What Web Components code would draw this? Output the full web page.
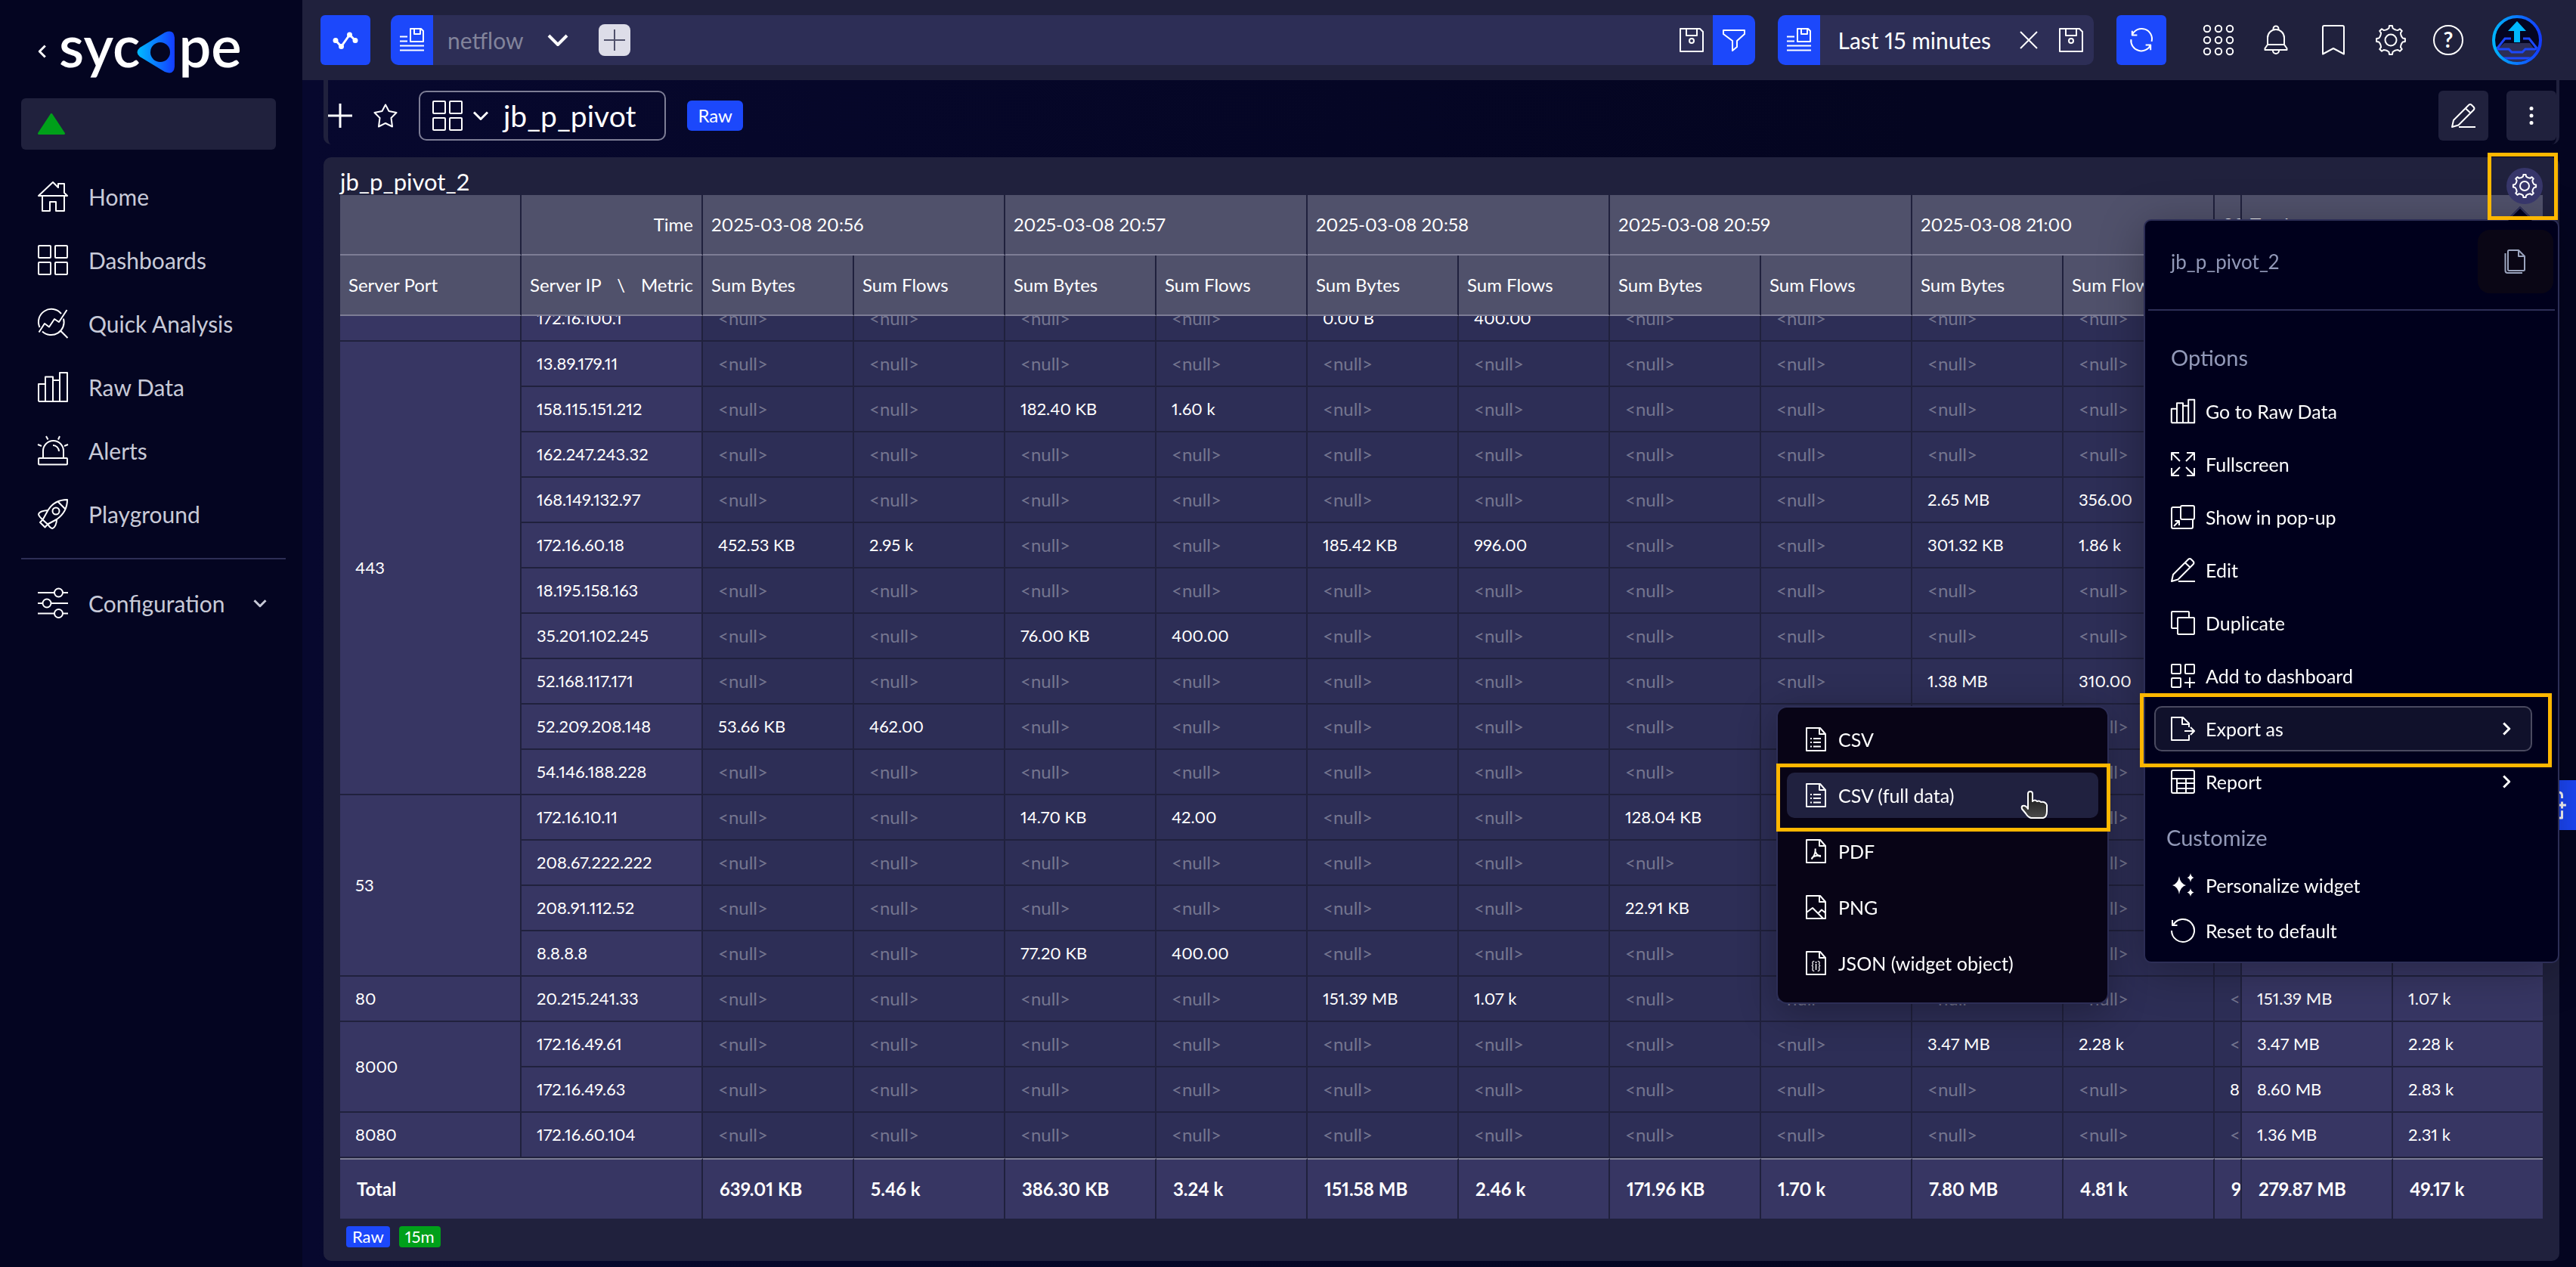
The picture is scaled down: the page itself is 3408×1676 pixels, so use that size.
<!DOCTYPE html>
<html lang="en">
<head>
<meta charset="utf-8">
<title>jb_p_pivot</title>
<style>
  :root {
    --blue: #1c48fb;
    --panel: #20213d;
    --field: #2d2e56;
    --head: #50516b;
    --line: #7d7d95;
    --key: #373663;
    --mark: #ffb700;
  }
  body {
    margin: 0;
    height: 100vh;
    overflow: hidden;
    color: #fff;
    font-family: Lato, "Open Sans", sans-serif;
    font-size: 24px;
    font-variant-numeric: proportional-nums;
    background: linear-gradient(90deg, #07082e 12%, #040520 75%);
  }
</style>
</head>
<body>
<app-shell></app-shell>

<script>
// 8 teeth gear, centered in a 40x40 box
function gearPath() {
  const pts = []
  const shape = [[-18, 15], [-9, 16], [-6, 19], [6, 19], [9, 16], [18, 15]]
  for (let i = 0; i < 8; i++) {
    for (const [deg, r] of shape) {
      const a = (i * 45 + deg - 90) * Math.PI / 180
      pts.push((20 + r * Math.cos(a)).toFixed(2) + ' ' + (20 + r * Math.sin(a)).toFixed(2))
    }
  }
  return 'M' + pts.join('L') + 'Z'
}

const FILE = '<path d="M4 1h18l7 8v22H4zM21 1v8h8"/>'

// [viewBox size, markup]
const ICONS = {
  home: [40, '<path d="M1 19 20 1l7 7V3h8v12l4 4zM6 20v19h10V27h8v12h11V20"/>'],
  grid: [40, '<rect x="1" y="1" width="16" height="16" rx="1"/><rect x="23" y="1" width="16" height="16" rx="1"/><rect x="1" y="23" width="16" height="16" rx="1"/><rect x="23" y="23" width="16" height="16" rx="1"/>'],
  analysis: [40, '<path d="M2.500 25A17 17 0 0 1 31 7M34 13.500A17 17 0 0 1 6 30.500M1.500 31.500 9 20l6 4.500L22 14l6 4L38.500 2M30 29.500l9.500 9.500"/>'],
  bars: [40, '<path d="M10 39V6.500h10V39M1 39V16h9M20 11h9M29 39V1h10v38H1"/>'],
  alert: [40, '<rect x="1" y="30" width="38" height="8.500" rx="1"/><path d="M7 30V20.500a13 13 0 0 1 27 0V30M20 13a8 8 0 0 1 8 8M11 1l2.500 4.500M29 1l-2 4.500M0 12l5 2M40 12l-5 2"/>'],
  rocket: [40, '<path d="M39 1C28 1 19 6 13.500 15L6.500 27.500l6.500 6 12-6.500C35 20 39 12 39 1zM13.500 15C7 15.500 2 17 1 20c0 3 3 5 5.500 7.500M25 27c0 6-2.500 11-5.500 12-3 0-4.500-3-6.500-5.500M6.500 27.500 3 31l6.500 6.500L13 33.500M27 4l9.500 9.500"/><circle cx="24" cy="16" r="4.500"/>'],
  sliders: [40, '<path d="M0 6h22M33 6h7M0 20h7M17 20h23M0 33.500h22M33 33.500h7"/><circle cx="27.500" cy="6" r="5.500"/><circle cx="12" cy="20" r="5.500"/><circle cx="27.500" cy="33.500" r="5.500"/>'],
  chart: [32, '<path d="M3 16.500 10.500 24.500 21.500 9 29 16.500"/><g fill="currentColor"><circle cx="3" cy="16.500" r="2"/><circle cx="10.500" cy="24.500" r="2"/><circle cx="21.500" cy="9" r="2"/><circle cx="29" cy="16.500" r="2"/></g>'],
  saveList: [32, '<path d="M14 1h14l3 3v14H14zM19 1v7h8V1M0 11.500h10M0 17.500h10M0 23.500h32M0 29.500h32"/>'],
  save: [32, '<path d="M1 1h26l4 4v26H1zM9 1v9h14V1"/><ellipse cx="16" cy="17" rx="3" ry="3"/>'],
  filter: [32, '<path d="M2 3h28v5l-10 9v8l-6 5V17L2 8z"/>'],
  close: [32, '<path d="M5 5l22 22M27 5 5 27"/>'],
  refresh: [32, '<path d="M1.500 15A14.500 14.500 0 0 0 29 23M30.500 18A14.500 14.500 0 0 0 3 9M3 3v6h7M22 23h7v7"/>'],
  apps: [40, [5, 20, 35].map(y => [5, 20, 35].map(x => `<circle cx="${x}" cy="${y}" r="4.200"/>`).join('')).join('')],
  bell: [40, '<path d="M9 26V17a11 11 0 0 1 22 0v9l3.500 5v2h-29v-2zM9 26h22M16.500 6.500V5a3.500 3.500 0 0 1 7 0v1.500M16 34a4 4 0 0 0 8 0"/>'],
  bookmark: [40, '<path d="M6 38.500V3a2 2 0 0 1 2-2h24a2 2 0 0 1 2 2v35.500L20 31z"/>'],
  gear: [40, `<path d="${gearPath()}"/><circle cx="20" cy="20" r="7.500"/>`],
  help: [40, '<circle cx="20" cy="20" r="19"/><text x="20" y="30" text-anchor="middle" font-size="28" font-weight="700" fill="currentColor" stroke="none">?</text>'],
  plus: [32, '<path d="M16 0v32M0 16h32"/>'],
  star: [32, '<path d="M16 1.500l4.500 8.500 10 2-7 7 1.500 11.500-9-4.500-9 4.500L8.500 19l-7-7 10-2z"/>'],
  pencil: [32, '<path d="M1 31l2-9L23 2q2-2 4 0l2.500 2.500q2 2 0 4L9.500 28.500zM19 6.500l6.500 6M10 31h22"/>'],
  dots: [32, '<g fill="currentColor" stroke="none"><circle cx="16" cy="6.500" r="2.500"/><circle cx="16" cy="16" r="2.500"/><circle cx="16" cy="25.500" r="2.500"/></g>'],
  down: [32, '<path d="M4 10l12 12 12-12"/>'],
  right: [32, '<path d="M10 4l12 12-12 12"/>'],
  left: [32, '<path d="M22 4 10 16l12 12"/>'],
  copy: [32, '<path d="M6 2.500Q6 1 7.500 1H20l8 8v17.500q0 1.500-1.500 1.500h-19Q6 28 6 26.500zM20 1v8h8M2.500 5v23q0 3 3 3H25"/>'],
  fullscreen: [32, '<path d="M1 11V1h10M1 1l11 11M21 1h10v10M31 1 20 12M1 21v10h10M1 31l11-11M21 31h10V21M31 31 20 20"/>'],
  popup: [32, '<rect x="13" y="1" width="18" height="18" rx="2"/><path d="M13 3H3Q1 3 1 5v24q0 2 2 2h24q2 0 2-2V19M4 28l7-7M5.500 21H11v6"/>'],
  duplicate: [32, '<rect x="9" y="9" width="22" height="22" rx="1"/><path d="M9 23H2q-1 0-1-1V2q0-1 1-1h21q1 0 1 1v7"/>'],
  addTo: [32, '<rect x="1" y="1" width="12" height="12" rx="1"/><rect x="19" y="1" width="12" height="12" rx="1"/><rect x="1" y="19" width="12" height="12" rx="1"/><path d="M25 18v14M18 25h14"/>'],
  exportAs: [32, '<path d="M24 14V9l-8-8H1v30h23v-7M15 1v9h9M18 19h13M26 14l5 5-5 5"/>'],
  report: [32, '<rect x="1" y="1" width="30" height="30" rx="2"/><path d="M1 12h30M8 12v19M20 12v19M8 18h23M8 25h23"/>'],
  sparkle: [32, '<g fill="currentColor" stroke="none"><path d="M11 4q1.500 10 9 12-7.500 2-9 12-1.500-10-9-12 7.500-2 9-12zM26 0q.8 5 4.500 6-3.700 1-4.500 6-.8-5-4.500-6 3.700-1 4.500-6zM26 20q.8 4.500 4.500 5.500-3.700 1-4.500 5.500-.8-4.500-4.500-5.500 3.700-1 4.500-5.500z"/></g>'],
  reset: [32, '<path d="M1 16A15 15 0 1 0 3 8.500M2 2v7h6.500"/>'],
  csv: [32, FILE + '<path d="M9 15h2M13 15h10M9 20h2M13 20h10M9 25.500h2M13 25.500h10"/>'],
  pdf: [32, FILE + '<path d="M15.500 12.500c1 5-2 11-5 14M16 17c1 3 4 5.500 7 6M11 25c3-3 7-3.500 12-3"/>'],
  png: [32, FILE + '<path d="M4 23l8-6 14 14M20 23.500l4-4 5 4"/>'],
  json: [32, FILE + '<text x="16.500" y="25" text-anchor="middle" font-size="15" fill="currentColor" stroke="none">{i}</text>'],
  snippet: [40, '<path d="M14 1h16q5 0 5 5v4M35 15v10M29 20h12M35 28v11H14" stroke-width="3"/>']
}

class AppIcon extends HTMLElement {
  constructor() {
    super()
    this.attachShadow({ mode: 'open' })
  }

  connectedCallback() {
    const [box, markup] = ICONS[this.getAttribute('name')]
    const size = this.getAttribute('size') ?? '32'
    const weight = this.getAttribute('weight') ?? '2'
    this.shadowRoot.innerHTML = `
      <style>
        :host { display: inline-flex; flex: none; }
        svg { display: block; overflow: visible; }
        svg * { vector-effect: non-scaling-stroke; }
      </style>
      <svg width="${size}" height="${size}" viewBox="0 0 ${box} ${box}" fill="none" stroke="currentColor"
        stroke-width="${weight}" stroke-linejoin="round" aria-hidden="true">${markup}</svg>`
  }
}

class SycopeLogo extends HTMLElement {
  constructor() {
    super()
    this.attachShadow({ mode: 'open' })
    this.shadowRoot.innerHTML = `
      <style>
        :host { display: flex; align-items: center; font-size: 76px; line-height: 60px; font-weight: 600; }
        svg { margin: 0 5px 0 -4px; }
        span { margin-top: -18px; }
      </style>
      <span>syc</span>
      <svg width="50" height="56" viewBox="0 0 50 56" aria-hidden="true">
        <defs><linearGradient id="g"><stop stop-color="#00bcff"/><stop offset="1" stop-color="#143cff"/></linearGradient></defs>
        <path d="M4 22 37 2q12-5 13 7v38q-1 12-13 7L4 34q-7-6 0-12z" fill="url(#g)"/>
        <circle cx="31" cy="28" r="13" fill="#040521"/>
      </svg>
      <span>pe</span>`
  }
}

class NavItem extends HTMLElement {
  constructor() {
    super()
    this.attachShadow({ mode: 'open' })
  }

  connectedCallback() {
    const arrow = this.hasAttribute('expandable') ? '<app-icon name="down" size="20" weight="3"></app-icon>' : ''
    this.shadowRoot.innerHTML = `
      <style>
        :host { display: block; }
        a {
          display: flex; align-items: center; gap: 27px; height: 84px; padding: 0 46px 0 50px;
          color: #c8cad8; font-size: 30px; text-decoration: none;
        }
        app-icon:first-child { color: #fff; }
        span { flex: 1; }
      </style>
      <a href="#"><app-icon name="${this.getAttribute('icon')}" size="40"></app-icon><span><slot></slot></span>${arrow}</a>`
  }
}

class SideBar extends HTMLElement {
  constructor() {
    super()
    this.attachShadow({ mode: 'open' })
    this.shadowRoot.innerHTML = `
      <style>
        :host { display: block; background: #040521; }
        header { display: flex; align-items: center; gap: 12px; height: 130px; padding-left: 46px; box-sizing: border-box; padding-top: 8px; }
        button { border: 0; padding: 0; background: none; color: inherit; }
        .status {
          display: flex; align-items: center; width: calc(100% - 63px); height: 68px;
          margin: 0 35px 20px 28px; padding-left: 22px; border-radius: 6px; background: var(--panel);
        }
        hr { height: 2px; margin: 16px 22px 16px 28px; border: 0; background: var(--field); }
      </style>
      <header>
        <button aria-label="Collapse"><app-icon name="left" size="20" weight="3"></app-icon></button>
        <sycope-logo></sycope-logo>
      </header>
      <button class="status" aria-label="Status">
        <svg width="36" height="28" viewBox="0 0 36 28"><path d="M18 1.500 34.500 26.500H1.500z" fill="#00a01a" stroke="#00a01a" stroke-width="3" stroke-linejoin="round"/></svg>
      </button>
      <nav>
        <nav-item icon="home">Home</nav-item>
        <nav-item icon="grid">Dashboards</nav-item>
        <nav-item icon="analysis">Quick Analysis</nav-item>
        <nav-item icon="bars">Raw Data</nav-item>
        <nav-item icon="alert">Alerts</nav-item>
        <nav-item icon="rocket">Playground</nav-item>
        <hr>
        <nav-item icon="sliders" expandable>Configuration</nav-item>
      </nav>`
  }
}

class TopBar extends HTMLElement {
  constructor() {
    super()
    this.attachShadow({ mode: 'open' })
    this.shadowRoot.innerHTML = `
      <style>
        :host { display: flex; align-items: center; height: 106px; padding: 0 45px 0 24px; background: var(--panel); }
        button, select { border: 0; padding: 0; background: none; color: inherit; font: inherit; }
        button { display: flex; align-items: center; justify-content: center; }
        .square { width: 66px; height: 66px; border-radius: 6px; background: var(--blue); }
        .field { display: flex; align-items: center; height: 66px; border-radius: 10px; background: var(--field); overflow: hidden; font-size: 30px; }
        .field .cap { width: 56px; height: 66px; background: var(--blue); }
        .query { flex: 1; margin: 0 30px 0 27px; }
        .pick { position: relative; display: flex; align-items: center; margin: 0 38px 0 19px; }
        select { width: 162px; appearance: none; color: #82849b; opacity: 1; }
        .pick app-icon { position: absolute; right: 0; pointer-events: none; }
        .add { width: 42px; height: 42px; border-radius: 8px; background: #dddde8; color: #50516b; }
        .save { margin-left: auto; margin-right: 12px; }
        .time { margin-right: 30px; }
        .time .label { margin: 0 34px 0 24px; }
        .time .save { margin: 0 14px 0 24px; }
        .tools { display: flex; align-items: center; gap: 36px; margin: 0 38px 0 49px; }
      </style>
      <button class="square" aria-label="Chart"><app-icon name="chart" weight="3"></app-icon></button>
      <div class="field query">
        <button class="cap" aria-label="Saved queries"><app-icon name="saveList"></app-icon></button>
        <div class="pick">
          <select aria-label="Stream"><option>netflow</option></select>
          <app-icon name="down" size="32" weight="4"></app-icon>
        </div>
        <button class="add" aria-label="Add filter"><app-icon name="plus" size="28"></app-icon></button>
        <button class="save" aria-label="Save"><app-icon name="save"></app-icon></button>
        <button class="cap" aria-label="Filter"><app-icon name="filter"></app-icon></button>
      </div>
      <div class="field time">
        <button class="cap" aria-label="Saved ranges"><app-icon name="saveList"></app-icon></button>
        <button class="label">Last 15 minutes</button>
        <button aria-label="Clear"><app-icon name="close"></app-icon></button>
        <button class="save" aria-label="Save range"><app-icon name="save"></app-icon></button>
      </div>
      <button class="square" aria-label="Refresh"><app-icon name="refresh" size="30"></app-icon></button>
      <div class="tools">
        <button aria-label="Apps"><app-icon name="apps" size="40"></app-icon></button>
        <button aria-label="Notifications"><app-icon name="bell" size="40"></app-icon></button>
        <button aria-label="Bookmarks"><app-icon name="bookmark" size="40"></app-icon></button>
        <button aria-label="Settings"><app-icon name="gear" size="40"></app-icon></button>
        <button aria-label="Help"><app-icon name="help" size="40"></app-icon></button>
      </div>
      <button aria-label="Account">
        <svg width="66" height="66" viewBox="0 0 66 66">
          <defs>
            <linearGradient id="ring"><stop stop-color="#00b4ff"/><stop offset="1" stop-color="#143cff"/></linearGradient>
            <clipPath id="in"><circle cx="33" cy="33" r="29"/></clipPath>
          </defs>
          <circle cx="33" cy="33" r="31" fill="#040521"/>
          <g clip-path="url(#in)">
            <path d="M16 37h34l9 12-6 14H13L6 46z" fill="#2d2e56"/>
            <path d="M25 31h-8L6 45h16l4 4h14l4-4h16L49 31h-8M12 57h42" fill="none" stroke="#1c48fb" stroke-width="3"/>
            <path d="M33 8 45 21h-8v15h-8V21h-8z" fill="#00b8ff"/>
          </g>
          <circle cx="33" cy="33" r="31" fill="none" stroke="url(#ring)" stroke-width="4"/>
        </svg>
      </button>`
  }
}

class DashboardBar extends HTMLElement {
  constructor() {
    super()
    this.attachShadow({ mode: 'open' })
    this.shadowRoot.innerHTML = `
      <style>
        :host {
          display: flex; align-items: center; gap: 28px; height: 85px; box-sizing: border-box; padding-top: 9px;
          margin: 0 22px 17px 28px;
          border: solid var(--panel); border-width: 0 4px 0 6px; border-radius: 0 0 10px 10px;
        }
        button { display: flex; align-items: center; justify-content: center; border: 0; padding: 0; background: none; color: inherit; font: inherit; }
        .name { gap: 12px; height: 66px; padding: 0 38px 0 16px; border: 2px solid var(--line); border-radius: 10px; font-size: 39px; }
        .name app-icon + app-icon { margin-right: 6px; }
        .tool { width: 66px; height: 66px; border-radius: 6px; background: var(--panel); }
        .edit { margin-left: auto; margin-right: -4px; }
      </style>
      <button aria-label="New"><app-icon name="plus" weight="3"></app-icon></button>
      <button aria-label="Favourite"><app-icon name="star"></app-icon></button>
      <button class="name"><app-icon name="grid" size="40"></app-icon><app-icon name="down" size="24" weight="3"></app-icon>jb_p_pivot</button>
      <tag-label large>Raw</tag-label>
      <button class="tool edit" aria-label="Edit"><app-icon name="pencil"></app-icon></button>
      <button class="tool" aria-label="More"><app-icon name="dots"></app-icon></button>`
  }
}

class TagLabel extends HTMLElement {
  constructor() {
    super()
    this.attachShadow({ mode: 'open' })
    this.shadowRoot.innerHTML = `
      <style>
        :host { display: inline-block; padding: 0 8px; border-radius: 4px; background: var(--blue); font-size: 22px; line-height: 28px; }
        :host([green]) { background: #00a01a; }
        :host([large]) { padding: 0 14px; border-radius: 6px; font-size: 24px; line-height: 40px; }
      </style>
      <slot></slot>`
  }
}

const TIMES = ['20:56', '20:57', '20:58', '20:59', '21:00']
// server port, then its rows: ip and the filled cells by column (10 = cut column, 11 and 12 = row total)
const PORTS = [
  ['', [['172.16.100.1', { 4: '0.00 B', 5: '400.00' }]]],
  ['443', [
    ['13.89.179.11', {}],
    ['158.115.151.212', { 2: '182.40 KB', 3: '1.60 k' }],
    ['162.247.243.32', {}],
    ['168.149.132.97', { 8: '2.65 MB', 9: '356.00' }],
    ['172.16.60.18', { 0: '452.53 KB', 1: '2.95 k', 4: '185.42 KB', 5: '996.00', 8: '301.32 KB', 9: '1.86 k' }],
    ['18.195.158.163', {}],
    ['35.201.102.245', { 2: '76.00 KB', 3: '400.00' }],
    ['52.168.117.171', { 8: '1.38 MB', 9: '310.00' }],
    ['52.209.208.148', { 0: '53.66 KB', 1: '462.00' }],
    ['54.146.188.228', {}]
  ]],
  ['53', [
    ['172.16.10.11', { 2: '14.70 KB', 3: '42.00', 6: '128.04 KB' }],
    ['208.67.222.222', {}],
    ['208.91.112.52', { 6: '22.91 KB' }],
    ['8.8.8.8', { 2: '77.20 KB', 3: '400.00' }]
  ]],
  ['80', [['20.215.241.33', { 4: '151.39 MB', 5: '1.07 k', 11: '151.39 MB', 12: '1.07 k' }]]],
  ['8000', [
    ['172.16.49.61', { 8: '3.47 MB', 9: '2.28 k', 11: '3.47 MB', 12: '2.28 k' }],
    ['172.16.49.63', { 10: '8', 11: '8.60 MB', 12: '2.83 k' }]
  ]],
  ['8080', [['172.16.60.104', { 11: '1.36 MB', 12: '2.31 k' }]]]
]
const TOTALS = ['639.01 KB', '5.46 k', '386.30 KB', '3.24 k', '151.58 MB', '2.46 k', '171.96 KB', '1.70 k', '7.80 MB', '4.81 k', '9', '279.87 MB', '49.17 k']

class PivotTable extends HTMLElement {
  constructor() {
    super()
    this.attachShadow({ mode: 'open' })
  }

  cell(values, col) {
    if (col > 10) return `<th class="sum">${values[col] ?? ''}</th>`
    const cut = values[11] ? '&lt;' : ''
    const text = values[col] ?? (col === 10 ? cut : '&lt;null&gt;')
    return `<td${values[col] ? '' : ' class="null"'}>${text}</td>`
  }

  body() {
    return PORTS.map(([port, rows]) => rows.map(([ip, values], i) => `
      <tr>${i ? '' : `<th rowspan="${rows.length}">${port}</th>`}<th>${ip}</th>${TOTALS.map((_, col) => this.cell(values, col)).join('')}</tr>`).join('')).join('')
  }

  connectedCallback() {
    this.shadowRoot.innerHTML = `
      <style>
        :host { display: block; overflow: auto; scrollbar-width: none; }
        table { width: 100%; table-layout: fixed; border-spacing: 0; }
        .key { width: 240px; }
        .metric { width: 200px; }
        .last { width: 198px; }
        th, td {
          box-sizing: border-box; height: 60px; padding: 0 0 0 20px; text-align: left; font-weight: 400; font-size: 22px; line-height: 26px;
          white-space: nowrap; overflow: hidden; border: solid var(--panel); border-width: 0 2px 2px 0; background: var(--field);
        }
        th { background: var(--key); }
        td.null { color: #74758f; font-size: 24px; }
        tr > :last-child { border-right: 0; }
        thead th { position: sticky; top: 0; height: 80px; padding: 0 11px; font-size: 24px; background: var(--head); border-bottom-color: var(--line); }
        thead tr + tr th { top: 80px; }
        thead .right { text-align: right; }
        .pair { display: flex; justify-content: space-between; }
        tfoot th, tfoot td { position: sticky; bottom: 0; height: 80px; padding-left: 22px; border-width: 2px 2px 0 0; border-top-color: var(--line); background: var(--key); font-size: 24px; font-weight: 700; }
      </style>
      <table>
        <colgroup>
          <col class="key"><col class="key">${'<col class="metric">'.repeat(10)}<col><col class="metric"><col class="last">
        </colgroup>
        <thead>
          <tr><th></th><th class="right">Time</th>${TIMES.map(t => `<th colspan="2">2025-03-08 ${t}</th>`).join('')}<th>20</th><th colspan="2">Total</th></tr>
          <tr><th>Server Port</th><th><span class="pair"><span>Server IP</span><span>\\</span><span>Metric</span></span></th>${TIMES.map(() => '<th>Sum Bytes</th><th>Sum Flows</th>').join('')}<th></th><th></th><th></th></tr>
        </thead>
        <tbody>${this.body()}</tbody>
        <tfoot><tr><th colspan="2">Total</th>${TOTALS.map(v => `<td>${v}</td>`).join('')}</tr></tfoot>
      </table>`
    // opened scrolled down to the last row
    this.scrollTop = this.scrollHeight
  }
}

class MenuItem extends HTMLElement {
  constructor() {
    super()
    this.attachShadow({ mode: 'open' })
  }

  connectedCallback() {
    const arrow = this.hasAttribute('arrow') ? '<app-icon name="right" size="20" weight="3"></app-icon>' : ''
    this.shadowRoot.innerHTML = `
      <style>
        :host { display: block; position: relative; }
        button {
          display: flex; align-items: center; gap: 14px; width: 100%; height: 60px; padding: 0 22px 0 20px;
          border: 2px solid transparent; border-radius: 10px; background: none; color: #fff; font: inherit; font-size: 25px; text-align: left;
        }
        span { flex: 1; }
        :host([active]) button { background: #10112b; border-color: #4a4a60; }
        :host([hover]) button { background: #20213f; }
      </style>
      <button><app-icon name="${this.getAttribute('icon')}"></app-icon><span><slot></slot></span>${arrow}</button>`
  }
}

class ExportMenu extends HTMLElement {
  constructor() {
    super()
    this.attachShadow({ mode: 'open' })
    this.shadowRoot.innerHTML = `
      <style>
        :host {
          display: flex; flex-direction: column; gap: 14px; box-sizing: border-box; width: 440px; padding: 12px 12px 22px;
          border: 2px solid var(--field); border-radius: 14px; background: #080416; box-shadow: 0 10px 50px rgba(0, 0, 0, .3);
        }
        .mark::after { content: ""; position: absolute; inset: -12px -16px -18px -14px; border: 5px solid var(--mark); pointer-events: none; }
        .pointer { position: absolute; left: 308px; top: 22px; }
      </style>
      <menu-item icon="csv">CSV</menu-item>
      <menu-item icon="csv" hover class="mark">CSV (full data)
        <svg class="pointer" width="38" height="40" viewBox="0 0 38 40" aria-hidden="true">
          <defs><linearGradient id="p" x2="0" y2="1"><stop stop-color="#111"/><stop offset="1" stop-color="#4c4c4c"/></linearGradient></defs>
          <path d="M11 26V6q0-3 3-3t3 3v10q3-3 6 0 3-1.500 5 1 6-1 8 4v8q0 8-5 9H15q-4-1-7-6l-5-6q-1-3 1-4 4-1 7 4z" fill="url(#p)" stroke="#fff" stroke-width="2" stroke-linejoin="round"/>
        </svg>
      </menu-item>
      <menu-item icon="pdf">PDF</menu-item>
      <menu-item icon="png">PNG</menu-item>
      <menu-item icon="json">JSON (widget object)</menu-item>`
  }
}

class WidgetMenu extends HTMLElement {
  constructor() {
    super()
    this.attachShadow({ mode: 'open' })
    this.shadowRoot.innerHTML = `
      <style>
        :host {
          display: block; box-sizing: border-box; width: 550px; border: 2px solid var(--field); border-radius: 10px;
          background: #00001c; box-shadow: 0 10px 60px rgba(0, 0, 0, .3);
        }
        :host::before {
          content: ""; position: absolute; right: 38px; top: -14px; width: 22px; height: 22px;
          background: #00001c; border: solid var(--field); border-width: 2px 0 0 2px; transform: rotate(45deg);
        }
        header { position: relative; display: flex; align-items: center; justify-content: space-between; height: 119px; box-sizing: border-box; margin: 0 4px; padding: 0 2px 10px 30px; border-bottom: 2px solid var(--field); color: #9299b8; font-size: 26px; }
        header button { display: flex; align-items: center; justify-content: center; width: 100px; height: 84px; border: 0; border-radius: 16px; background: #0a0615; color: #9aa3bd; }
        h3 { margin: 0; font-size: 29px; line-height: 34px; font-weight: 400; color: #9299b8; }
        .options { margin: 45px 0 24px 34px; }
        .customize { margin: 27px 0 16px 28px; }
        .list { display: flex; flex-direction: column; gap: 10px; padding: 0 34px 0 12px; }
        .list.tight { gap: 0; padding-bottom: 11px; }
        .export::after { content: ""; position: absolute; inset: -17px -26px -21px -19px; border: 5px solid var(--mark); pointer-events: none; }
        export-menu { position: absolute; right: 594px; top: 642px; }
      </style>
      <header>jb_p_pivot_2<button aria-label="Copy name"><app-icon name="copy"></app-icon></button></header>
      <h3 class="options">Options</h3>
      <div class="list">
        <menu-item icon="bars">Go to Raw Data</menu-item>
        <menu-item icon="fullscreen">Fullscreen</menu-item>
        <menu-item icon="popup">Show in pop-up</menu-item>
        <menu-item icon="pencil">Edit</menu-item>
        <menu-item icon="duplicate">Duplicate</menu-item>
        <menu-item icon="addTo">Add to dashboard</menu-item>
        <menu-item icon="exportAs" arrow active class="export">Export as</menu-item>
        <menu-item icon="report" arrow>Report</menu-item>
      </div>
      <h3 class="customize">Customize</h3>
      <div class="list tight">
        <menu-item icon="sparkle">Personalize widget</menu-item>
        <menu-item icon="reset">Reset to default</menu-item>
      </div>
      <export-menu></export-menu>`
  }
}

class WidgetCard extends HTMLElement {
  constructor() {
    super()
    this.attachShadow({ mode: 'open' })
    this.shadowRoot.innerHTML = `
      <style>
        :host {
          position: relative; display: flex; flex-direction: column; flex: 1; min-height: 0;
          margin: 0 22px 8px 28px; padding: 0 22px; border-radius: 10px; background: var(--panel);
        }
        header { display: flex; align-items: flex-start; height: 50px; padding-top: 14px; box-sizing: border-box; }
        h2 { flex: 1; margin: 0; font-size: 31px; line-height: 36px; font-weight: 400; }
        .gear { position: relative; z-index: 3; }
        .gear button { display: flex; align-items: center; justify-content: center; width: 48px; height: 48px; padding: 0; border: 0; border-radius: 50%; background: #37366a; color: #fff; }
        .gear::after { content: ""; position: absolute; inset: -20px -20px -21px -25px; border: 5px solid var(--mark); pointer-events: none; }
        pivot-table { flex: 1; min-height: 0; }
        footer { display: flex; gap: 12px; height: 56px; box-sizing: border-box; padding: 10px 8px 18px; }
        widget-menu { position: absolute; z-index: 2; top: 82px; right: 0; }
      </style>
      <header>
        <h2><slot name="title"></slot></h2>
        <div class="gear"><button aria-label="Widget settings"><app-icon name="gear"></app-icon></button></div>
      </header>
      <pivot-table></pivot-table>
      <footer><tag-label>Raw</tag-label><tag-label green>15m</tag-label></footer>
      <widget-menu></widget-menu>`
  }
}

class AppShell extends HTMLElement {
  constructor() {
    super()
    this.attachShadow({ mode: 'open' })
    this.shadowRoot.innerHTML = `
      <style>
        :host { position: relative; display: grid; grid-template-columns: 400px minmax(0, 1fr); height: 100vh; }
        main { display: flex; flex-direction: column; min-height: 0; }
        widget-card { z-index: 1; }
        .drawer {
          position: absolute; z-index: 0; right: 0; bottom: 578px; display: flex; align-items: center; justify-content: center;
          width: 64px; height: 66px; padding: 0; border: 0; background: var(--blue); color: #fff;
        }
      </style>
      <side-bar></side-bar>
      <main>
        <top-bar></top-bar>
        <dashboard-bar></dashboard-bar>
        <widget-card><span slot="title">jb_p_pivot_2</span></widget-card>
      </main>
      <button class="drawer" aria-label="Snippets"><app-icon name="snippet" size="36"></app-icon></button>`
  }
}

customElements.define('app-icon', AppIcon)
customElements.define('sycope-logo', SycopeLogo)
customElements.define('nav-item', NavItem)
customElements.define('side-bar', SideBar)
customElements.define('tag-label', TagLabel)
customElements.define('top-bar', TopBar)
customElements.define('dashboard-bar', DashboardBar)
customElements.define('pivot-table', PivotTable)
customElements.define('menu-item', MenuItem)
customElements.define('export-menu', ExportMenu)
customElements.define('widget-menu', WidgetMenu)
customElements.define('widget-card', WidgetCard)
customElements.define('app-shell', AppShell)
</script>
</body>
</html>
